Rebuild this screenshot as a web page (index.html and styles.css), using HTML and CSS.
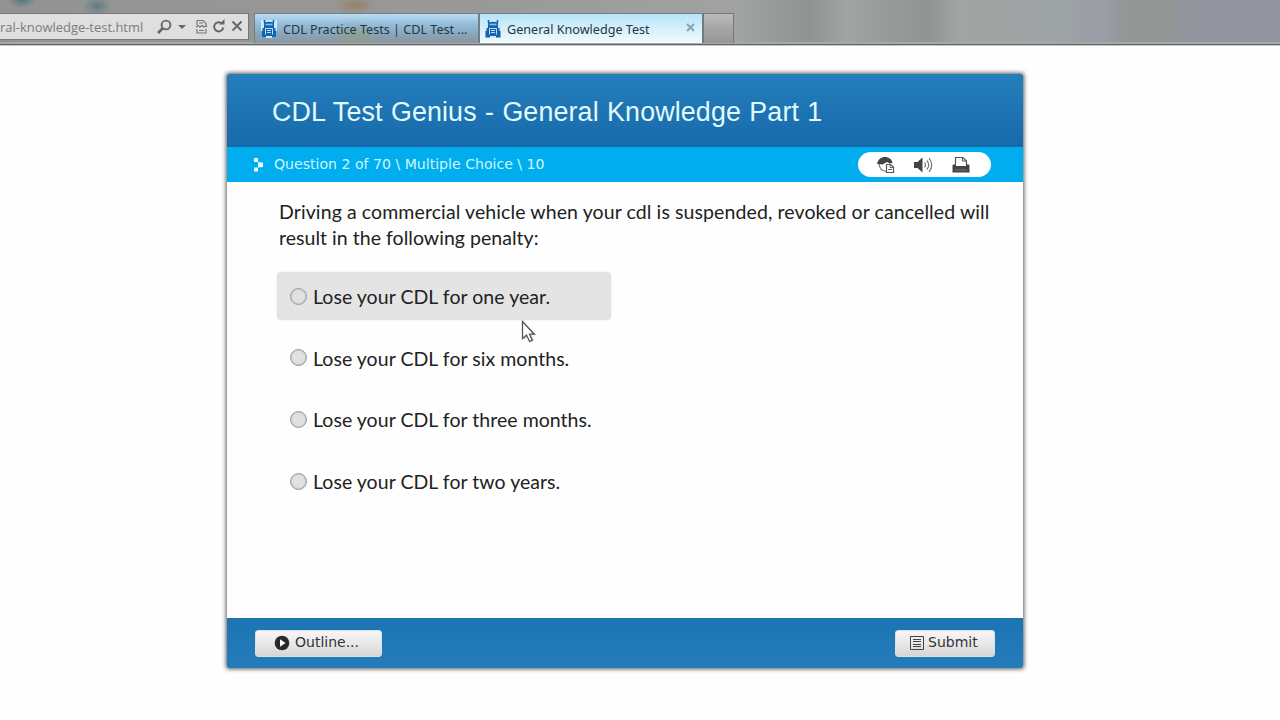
FILE: index.html
```html
<!DOCTYPE html>
<html lang="en">
<head>
    <meta charset="UTF-8">
    <title>General Knowledge Test</title>
    <link rel="stylesheet" href="styles.css">
</head>
<body>
<svg width="0" height="0" class="defs">
    <symbol id="truck" viewBox="0 0 16 18">
        <path d="M3.500 0v3M12.500 0v3" stroke="#1763a8" stroke-width="1.600"/>
        <path d="M3 2.500q5-1.500 10 0V8h1.500v3h1v6.500H11V16H5v1.500H.5V11h1V8H3z" fill="#1763b0"/>
        <path d="M4.500 4.500h7" stroke="#7fc0ec" stroke-width="1.600"/>
        <path d="M4.500 14.500v-6h7v6M6 10.500h4M6 12.500h4" stroke="#b5dff8" fill="none"/>
    </symbol>
</svg>

<div class="browser-bar">
    <div class="address">
        <span class="url">ral-knowledge-test.html</span>
        <svg class="address-icons" width="90" height="20" viewBox="0 0 90 20" fill="none" stroke="#686868">
            <circle cx="11" cy="8" r="4.400" stroke-width="1.900"/>
            <path d="M8 11l-5 5" stroke-width="2.600"/>
            <path d="M23 8h8l-4 4z" fill="#686868" stroke="none"/>
            <path d="M42 8V3.500h6l3 3V8M42 12v4h9v-4M44 6h4M44 13.500h5M41 10l2-1.500 2 1.500 2-1.500 2 1.500 2-1.500 1 1.500" stroke-width="1.200" stroke="#777"/>
            <path d="M67 6.500a4.600 4.600 0 1 0 1.300 4" stroke-width="2"/>
            <path d="M64 7.500h5.500V2z" fill="#686868" stroke="none"/>
            <path d="M77.500 4.500l9 9M86.500 4.500l-9 9" stroke-width="2"/>
        </svg>
    </div>
    <div class="tab tab-back">
        <svg class="favicon"><use href="#truck"/></svg>
        <span class="tab-title">CDL Practice Tests | CDL Test ...</span>
    </div>
    <div class="tab tab-active">
        <svg class="favicon"><use href="#truck"/></svg>
        <span class="tab-title">General Knowledge Test</span>
        <svg class="tab-close" width="10" height="10" viewBox="0 0 10 10"><path d="M1 1l7 7M8 1l-7 7" stroke="#8aa3b2" stroke-width="2"/></svg>
    </div>
    <div class="new-tab"></div>
</div>

<div class="quiz">
    <div class="quiz-header">
        <h1>CDL Test Genius - General Knowledge Part 1</h1>
    </div>
    <div class="quiz-status">
        <svg class="marker" width="12" height="14" viewBox="0 0 12 14" fill="#e4fbff">
            <path d="M1 0h4v4H1zM5 4l5 .5V9l-5 .5zM1 9.500h4v4H1z"/>
        </svg>
        <span class="status-text">Question 2 of 70 \ Multiple Choice \ 10</span>
        <div class="tools">
            <svg width="18" height="18" viewBox="0 0 18 18">
                <path d="M0 8C1 3.500 4 1 8 1s7 2.500 7.500 6l-3 .5L10 6 5.500 8.500z" fill="#444"/>
                <path d="M2 8c.5 4 3 7 7.500 7.500" fill="none" stroke="#777" stroke-width="1.200"/>
                <path d="M9.500 8.500h4l3 2.500v5.500h-7z" fill="#fff" stroke="#555" stroke-width="1.200"/>
                <path d="M13 8.500v3h3M11 13.500h4" fill="none" stroke="#666"/>
            </svg>
            <svg width="20" height="18" viewBox="0 0 20 18" fill="none" stroke="#777" stroke-width="1.200">
                <path d="M0 6h3.500L8.500 1.500v15L3.500 12H0z" fill="#444" stroke="none"/>
                <path d="M10.500 6.500q2 2.500 0 5M12.800 4.500q4 4.500 0 9M15 2.200q5.500 6.800 0 13.600"/>
            </svg>
            <svg width="18" height="18" viewBox="0 0 18 18">
                <path d="M3.500 9V1.500H11L14.500 5v4" fill="#fff" stroke="#555" stroke-width="1.200"/>
                <path d="M10.500 1.500V5h4" fill="none" stroke="#555"/>
                <path d="M.5 9.500q0-1 1-1H4V10h10V8.500h2.500q1 0 1 1v7H.5z" fill="#444"/>
                <path d="M3 14h12" stroke="#777"/>
            </svg>
        </div>
    </div>
    <div class="quiz-body">
        <p class="question">Driving a commercial vehicle when your cdl is suspended, revoked or cancelled will<br><span class="line-end">result in the following penalty:</span></p>
        <div class="options">
            <div class="option hover"><i class="radio"></i><span>Lose your CDL for one year.</span></div>
            <div class="option"><i class="radio"></i><span>Lose your CDL for six months.</span></div>
            <div class="option"><i class="radio"></i><span>Lose your CDL for three months.</span></div>
            <div class="option"><i class="radio"></i><span>Lose your CDL for two years.</span></div>
        </div>
    </div>
    <div class="quiz-footer">
        <div class="button outline">
            <svg width="16" height="16" viewBox="0 0 16 16"><circle cx="8" cy="8" r="7.300" fill="#292929"/><path d="M6 4.300v7.400L11.500 8z" fill="#fff"/></svg>
            <span>Outline...</span>
        </div>
        <div class="button submit">
            <svg width="14" height="16" viewBox="0 0 14 16" fill="none" stroke="#444"><path d="M.5 1.500h13v13H.5z"/><path d="M3 4.500h8M3 6.500h8M3 9.500h8M3 11.500h8"/></svg>
            <span>Submit</span>
        </div>
    </div>
</div>

<svg class="cursor" width="18" height="26" viewBox="0 0 18 26">
    <path d="M3 3v17l4-4 3 6 3-1.500-2.500-5.500h5z" fill="#888" opacity=".45"/>
    <path d="M1.500 1.500v17l4-3.500 3 6.500 2.700-1.300-2.700-6h4.800z" fill="#fff" stroke="#555" stroke-width="1.300"/>
</svg>
</body>
</html>
```
FILE: styles.css
```css
body {
    margin: 0;
    height: 720px;
    overflow: hidden;
    background-color: #fdfefd;
    font-family: "DejaVu Sans", Verdana, sans-serif;
}

.defs {
    position: absolute;
}

/* browser chrome */
.browser-bar {
    display: flex;
    box-sizing: border-box;
    height: 46px;
    padding-top: 13px;
    border-bottom: 1px solid #c3c9cb;
    box-shadow: inset 0 -1px #626668, inset 0 -3px #a6a9a8;
    background:
        radial-gradient(ellipse 14px 8px at 22px 0, #557580, transparent),
        radial-gradient(ellipse 14px 9px at 97px 6px, #607b84, transparent),
        radial-gradient(ellipse 22px 10px at 355px 5px, #94816f, transparent),
        linear-gradient(90deg, #929292, #999a98 480px, #a0a3a0 740px, #8f9492 810px, #a0a4a2 848px, #8f9492 925px, #a0a4a2 960px, #9da2a5 1070px, #9a9ca6 1105px, #919695 1130px, #919695 1170px, #92959e 1190px, #92959e);
}

.address {
    display: flex;
    align-items: center;
    box-sizing: border-box;
    width: 249px;
    height: 27px;
    margin-right: 5px;
    border: solid #777;
    border-width: 1px 1px 1px 0;
    background-color: #dfdfdf;
}

.url {
    width: 143px;
    font: 12.950px "Open Sans", sans-serif;
    color: #7c7c7c;
    white-space: nowrap;
}

.address-icons {
    margin-left: 12px;
}

.tab {
    display: flex;
    align-items: center;
    box-sizing: border-box;
    height: 30px;
    padding-left: 6px;
    border: 1px solid #737f86;
    border-bottom: 0;
    color: #243746;
}

.tab-back {
    width: 225px;
    background:
        radial-gradient(ellipse 24px 16px at 100px 22px, rgba(145, 155, 120, 0.6), transparent),
        linear-gradient(#b9dcf3, #94bddb 35%, #87a2b5 75%, #8e979d);
}

.tab-active {
    width: 224px;
    padding-left: 5px;
    background: linear-gradient(#b6e4f9, #d5effb 50%, #f3fbfe);
}

.favicon {
    width: 16px;
    height: 18px;
    margin-right: 6px;
    background-color: #cbeafa;
}

.tab-title {
    padding-top: 1px;
    font: 12.600px "Noto Sans", sans-serif;
    white-space: nowrap;
}

.tab-close {
    margin: 0 6px 2px auto;
}

.new-tab {
    box-sizing: border-box;
    width: 31px;
    height: 30px;
    border: 1px solid #777;
    border-bottom: 0;
    background: linear-gradient(#bbb, #a5a5a5 50%, #969696);
}

/* quiz window */
.quiz {
    display: flex;
    flex-direction: column;
    width: 796px;
    height: 594px;
    margin: 28px 0 0 227px;
    border-radius: 2px;
    box-shadow: 0 0 4px 1px rgba(0, 0, 0, 0.65);
    overflow: hidden;
}

.quiz-header {
    height: 73px;
    padding-left: 45px;
    background: linear-gradient(#257ebb, #176aaa);
}

h1 {
    margin: 0;
    font: 26.800px/76px "Liberation Sans", Arial, sans-serif;
    letter-spacing: 0.150px;
    word-spacing: 0.700px;
    color: #e2fbff;
    white-space: nowrap;
}

.quiz-status {
    display: flex;
    align-items: center;
    height: 35px;
    padding: 0 32px 0 26px;
    background-color: #00aeef;
    color: #cdf6ff;
    font-size: 14.100px;
}

.marker {
    margin-right: 9px;
}

.status-text {
    padding-bottom: 2px;
    white-space: pre;
}

.tools {
    display: flex;
    align-items: center;
    justify-content: space-between;
    box-sizing: border-box;
    width: 133px;
    height: 25px;
    margin-left: auto;
    padding: 0 21px 0 19px;
    border-radius: 13px;
    background-color: #fff;
}

.quiz-body {
    flex: 1;
    padding: 17px 0 0 50px;
    background-color: #fdfefd;
    font: 19.500px/26px Lato, Calibri, sans-serif;
    color: #222;
}

.question {
    margin: 0 0 21px 2px;
    letter-spacing: 0.100px;
    white-space: nowrap;
}

.line-end {
    letter-spacing: 0.030px;
}

.option {
    display: flex;
    align-items: center;
    box-sizing: border-box;
    width: 334px;
    height: 48px;
    margin-bottom: 13.700px;
    padding-left: 13px;
    border-radius: 4px;
    letter-spacing: 0.040px;
    white-space: nowrap;
}

.option span {
    padding-top: 2px;
}

.option.hover {
    background-color: #e4e4e4;
    box-shadow: 0 0 2px #e4e4e4;
}

.radio {
    box-sizing: border-box;
    width: 17px;
    height: 17px;
    margin-right: 6px;
    border: 1px solid #969a9d;
    border-radius: 50%;
    background-color: #e0e1e1;
    box-shadow: inset 0 0 2px #aaa;
}

.quiz-footer {
    display: flex;
    align-items: center;
    justify-content: space-between;
    height: 50px;
    padding: 0 28px;
    background: linear-gradient(#1c74b3, #257cba);
}

.button {
    display: flex;
    align-items: center;
    box-sizing: border-box;
    height: 27px;
    border: 1px solid #d9e2e8;
    border-radius: 3px;
    background: linear-gradient(#f7f7f7, #e8e8e8 50%, #d5d5d5);
    font-size: 14px;
    color: #333;
}

.button span {
    padding-bottom: 2px;
}

.outline {
    width: 127px;
    padding-left: 18px;
}

.submit {
    width: 100px;
    padding-left: 14px;
}

.button svg {
    margin-right: 5px;
}

.submit svg {
    margin-right: 4px;
}

.cursor {
    position: absolute;
    left: 521px;
    top: 320px;
}
```
